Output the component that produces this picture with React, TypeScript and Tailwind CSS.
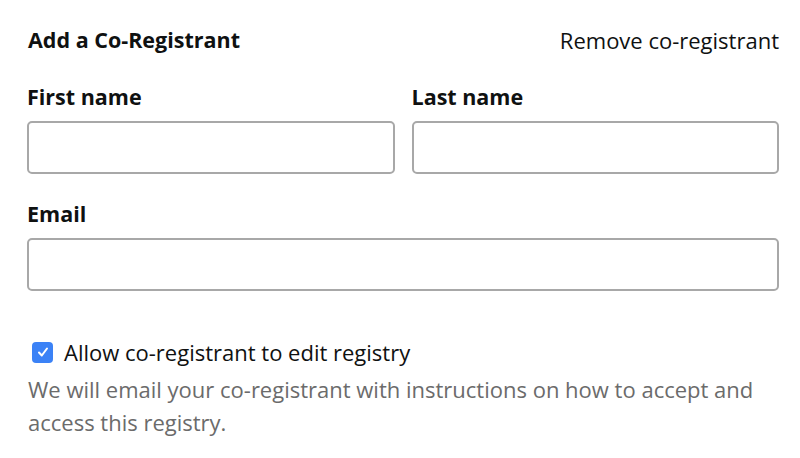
import { useState } from "react";

function Field({ label, className = "" }: { label: string; className?: string }) {
  return (
    <label className={`flex flex-col ${className}`}>
      <span className="text-[21.5px] font-bold leading-[28px] text-[#0f1111]">{label}</span>
      <input
        type="text"
        className="mt-[10px] h-[53px] w-full rounded-[5px] border-2 border-[#a8a8a8] bg-white px-3 text-[20px] outline-none"
      />
    </label>
  );
}

export default function App() {
  const [allowEdit, setAllowEdit] = useState(true);

  return (
    <div className="min-h-[458px] bg-white pl-[27px] pr-[21px] pt-[26px] font-['Open_Sans',sans-serif] text-[#0f1111]">
      <div className="flex items-center justify-between">
        <h2 className="pl-px text-[21.5px] font-bold leading-[28px]">Add a Co-Registrant</h2>
        <button type="button" className="text-[22px] leading-[28px] text-[#0f1111]">
          Remove co-registrant
        </button>
      </div>

      <div className="mt-[29px] grid grid-cols-2 gap-[17px]">
        <Field label="First name" />
        <Field label="Last name" />
      </div>

      <Field label="Email" className="mt-[26px]" />

      <label className="mt-[47px] flex cursor-pointer items-center gap-[11px] pl-[5px]">
        <span
          onClick={() => setAllowEdit((v) => !v)}
          className={`flex h-[21px] w-[21px] items-center justify-center rounded-[4px] ${
            allowEdit ? "bg-[#3b82f6]" : "border-2 border-[#a8a8a8] bg-white"
          }`}
        >
          {allowEdit && (
            <svg viewBox="0 0 16 16" className="h-[16px] w-[16px]" fill="none">
              <path d="M4 8.5l2.8 3L12 4.5" stroke="white" strokeWidth="2" strokeLinecap="round" strokeLinejoin="round" />
            </svg>
          )}
        </span>
        <span className="text-[22px] leading-[28px]">Allow co-registrant to edit registry</span>
      </label>

      <p className="mt-[7px] pl-px text-[22px] leading-[33px] text-[#6b6b6b]">
        We will email your co-registrant with instructions on how to accept and access this registry.
      </p>
    </div>
  );
}
